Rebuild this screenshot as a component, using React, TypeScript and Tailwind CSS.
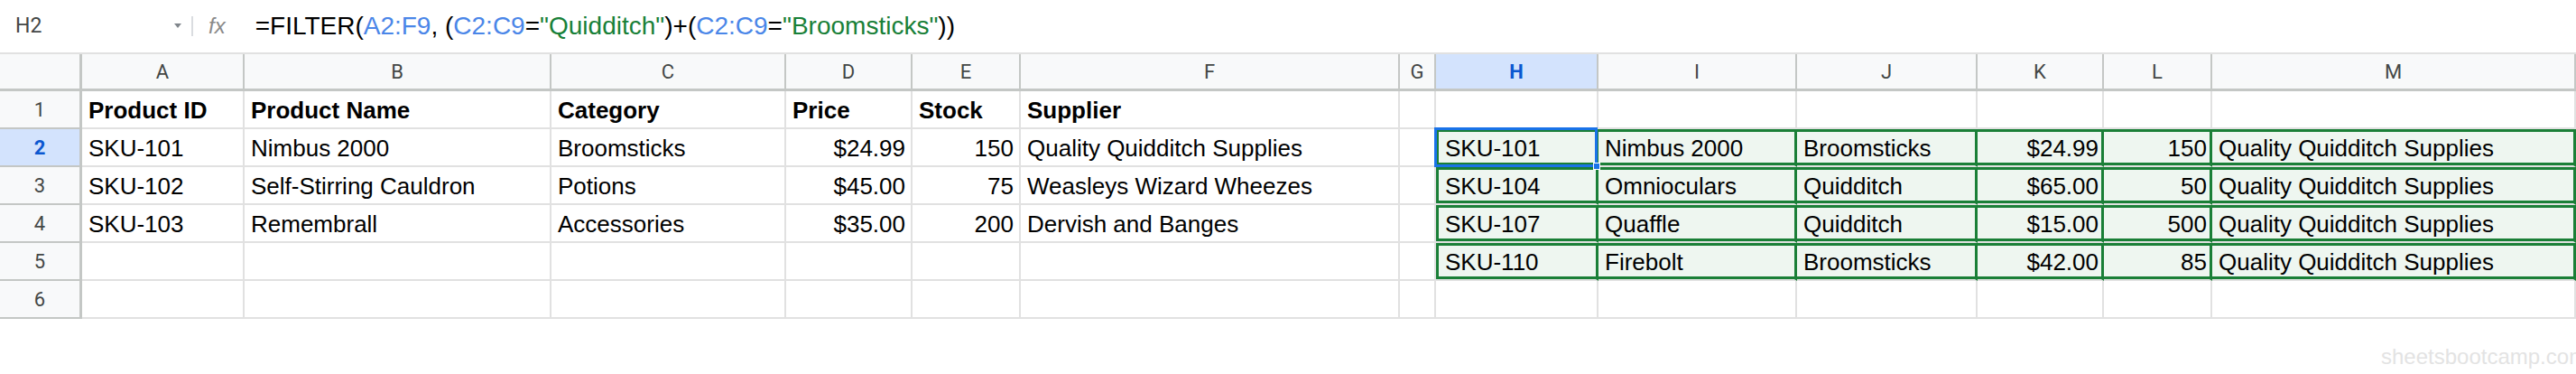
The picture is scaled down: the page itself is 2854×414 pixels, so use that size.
import React from "react";

type Cell = { t?: string; r?: boolean; b?: boolean };

const GRID =
  "grid grid-cols-[91px_180px_340px_260px_140px_120px_420px_40px_180px_220px_200px_140px_120px_403px]";

const LETTERS = ["A", "B", "C", "D", "E", "F", "G", "H", "I", "J", "K", "L", "M"];

const QQS = "Quality Quidditch Supplies";

const left: Cell[][] = [
  [
    { t: "Product ID", b: true },
    { t: "Product Name", b: true },
    { t: "Category", b: true },
    { t: "Price", b: true },
    { t: "Stock", b: true },
    { t: "Supplier", b: true },
  ],
  [{ t: "SKU-101" }, { t: "Nimbus 2000" }, { t: "Broomsticks" }, { t: "$24.99", r: true }, { t: "150", r: true }, { t: QQS }],
  [{ t: "SKU-102" }, { t: "Self-Stirring Cauldron" }, { t: "Potions" }, { t: "$45.00", r: true }, { t: "75", r: true }, { t: "Weasleys Wizard Wheezes" }],
  [{ t: "SKU-103" }, { t: "Remembrall" }, { t: "Accessories" }, { t: "$35.00", r: true }, { t: "200", r: true }, { t: "Dervish and Banges" }],
  [{}, {}, {}, {}, {}, {}],
  [{}, {}, {}, {}, {}, {}],
];

const right: (Cell[] | null)[] = [
  null,
  [{ t: "SKU-101" }, { t: "Nimbus 2000" }, { t: "Broomsticks" }, { t: "$24.99", r: true }, { t: "150", r: true }, { t: QQS }],
  [{ t: "SKU-104" }, { t: "Omnioculars" }, { t: "Quidditch" }, { t: "$65.00", r: true }, { t: "50", r: true }, { t: QQS }],
  [{ t: "SKU-107" }, { t: "Quaffle" }, { t: "Quidditch" }, { t: "$15.00", r: true }, { t: "500", r: true }, { t: QQS }],
  [{ t: "SKU-110" }, { t: "Firebolt" }, { t: "Broomsticks" }, { t: "$42.00", r: true }, { t: "85", r: true }, { t: QQS }],
  null,
];

const textCls =
  "font-['Liberation_Sans',Arial,sans-serif] text-[26px] leading-[29px] text-black whitespace-nowrap overflow-hidden";

function PlainCell({ c }: { c: Cell }) {
  return (
    <div className="h-[42px] border-r-2 border-b-2 border-[#e1e1e1] bg-white flex items-end overflow-hidden">
      <div
        className={`${textCls} w-full pl-[7px] pr-[6px] pb-[4px] flex ${c.r ? "justify-end" : "justify-start"} ${
          c.b ? "font-bold" : ""
        }`}
      >
        {c.t ?? ""}
      </div>
    </div>
  );
}

function GreenCell({ c, first, sel }: { c: Cell; first: boolean; sel: boolean }) {
  return (
    <div
      className={`relative h-[42px] border-r-[3px] border-b-2 border-b-[#e1e1e1] border-r-[#1a7f37] ${sel ? "z-10" : ""}`}
    >
      <div
        className={`h-full bg-[#eef6f0] border-y-[3px] border-[#1a7f37] ${first ? "border-l-[3px]" : ""} flex items-end`}
      >
        <div
          className={`${textCls} w-full pl-[7px] pr-[3px] pb-[1px] flex ${c.r ? "justify-end" : "justify-start"}`}
        >
          {c.t}
        </div>
      </div>
      {sel && (
        <>
          <div className="absolute -left-[2px] -top-[2px] -right-[2px] -bottom-[2px] border-[3px] border-[#1a73e8]" />
          <div className="absolute -right-[5px] -bottom-[5px] w-[8px] h-[8px] bg-[#1a73e8] border border-white" />
        </>
      )}
    </div>
  );
}

function RowHeader({ n, active }: { n: number; active: boolean }) {
  return (
    <div
      className={`h-[42px] border-r-[3px] border-b-2 border-r-[#c4c7c5] border-b-[#c4c7c5] flex items-center justify-center font-['Roboto',sans-serif] text-[22px] ${
        active ? "bg-[#d3e3fd] text-[#0b57d0] font-bold" : "bg-[#f8f9fa] text-[#444746]"
      }`}
    >
      {n}
    </div>
  );
}

export default function App() {
  return (
    <div className="relative w-[2854px] h-[414px] overflow-hidden bg-white">
      {/* Formula bar */}
      <div className="h-[58px] flex items-center">
        <div className="w-[212px] h-full flex items-center relative">
          <span className="ml-[17px] font-['Roboto',sans-serif] text-[23px] text-[#444746]">H2</span>
          <svg className="absolute left-[193px] top-[26px]" width="8" height="6" viewBox="0 0 8 6">
            <path d="M0 0 L8 0 L4 5 Z" fill="#80868b" />
          </svg>
        </div>
        <div className="w-[2px] h-[22px] bg-[#dadce0]" />
        <span className="ml-[17px] font-['Liberation_Sans',Arial,sans-serif] italic text-[24px] text-[#8a8a8a]">fx</span>
        <div className="ml-[33px] font-['Liberation_Sans',Arial,sans-serif] text-[28px] text-black whitespace-nowrap">
          <span>=FILTER(</span>
          <span className="text-[#4a86e8]">A2:F9</span>
          <span>, (</span>
          <span className="text-[#4a86e8]">C2:C9</span>
          <span>=</span>
          <span className="text-[#188038]">"Quidditch"</span>
          <span>)+(</span>
          <span className="text-[#4a86e8]">C2:C9</span>
          <span>=</span>
          <span className="text-[#188038]">"Broomsticks"</span>
          <span>))</span>
        </div>
      </div>

      {/* Sheet grid */}
      <div className={`${GRID} border-t-2 border-[#e1e1e1]`}>
        <div className="h-[41px] bg-[#f8f9fa] border-r-[3px] border-b-[3px] border-[#c4c7c5]" />
        {LETTERS.map((l) => {
          const active = l === "H";
          return (
            <div
              key={l}
              className={`h-[41px] border-r-2 border-b-[3px] border-[#c4c7c5] flex items-center justify-center font-['Roboto',sans-serif] text-[22px] ${
                active ? "bg-[#d3e3fd] text-[#0b57d0] font-bold" : "bg-[#f8f9fa] text-[#444746]"
              }`}
            >
              {l}
            </div>
          );
        })}

        {left.map((row, ri) => (
          <React.Fragment key={ri}>
            <RowHeader n={ri + 1} active={ri === 1} />
            {row.map((c, ci) => (
              <PlainCell key={ci} c={c} />
            ))}
            <PlainCell c={{}} />
            {right[ri]
              ? right[ri]!.map((c, ci) => (
                  <GreenCell key={ci} c={c} first={ci === 0} sel={ri === 1 && ci === 0} />
                ))
              : [0, 1, 2, 3, 4, 5].map((k) => <PlainCell key={k} c={{}} />)}
          </React.Fragment>
        ))}
      </div>

      <div className="absolute left-[2638px] top-[383px] font-['Liberation_Sans',Arial,sans-serif] text-[24px] leading-[24px] text-[#e3e3e3] whitespace-nowrap">
        sheetsbootcamp.com
      </div>
    </div>
  );
}
